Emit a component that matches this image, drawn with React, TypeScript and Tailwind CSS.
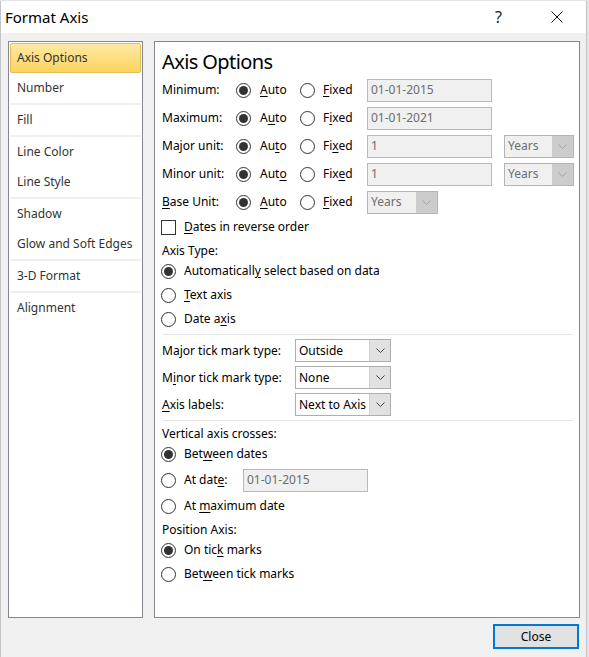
import type { ReactNode } from 'react'

// "&" marks the access key letter, like a Win32 resource string
function Mn({ text }: { text: string }) {
  const i = text.indexOf('&')
  if (i < 0) return <>{text}</>
  return (
    <>
      {text.slice(0, i)}
      <span className="underline decoration-1 underline-offset-[2px]">{text[i + 1]}</span>
      {text.slice(i + 2)}
    </>
  )
}

function Radio({ checked }: { checked?: boolean }) {
  return (
    <span className="w-[15px] h-[15px] rounded-full border border-[#333333] bg-white flex items-center justify-center shrink-0">
      {checked && <span className="w-[9px] h-[9px] rounded-full bg-[#333333]" />}
    </span>
  )
}

function Chevron({ color }: { color: string }) {
  return (
    <svg width="9" height="5" viewBox="0 0 9 5">
      <polyline points="0.5,0.5 4.5,4.5 8.5,0.5" fill="none" stroke={color} strokeWidth="1" />
    </svg>
  )
}

function TextBox({ value }: { value: string }) {
  return (
    <div className="w-[125px] h-[23px] border border-[#b9b9b9] bg-[#f0f0f0] text-[#6d6d6d] flex items-center px-[3px] shrink-0">
      {value}
    </div>
  )
}

function Combo({ value, disabled, width }: { value: string; disabled?: boolean; width: string }) {
  return (
    <div
      className={`${width} h-[23px] border flex shrink-0 ${
        disabled ? 'border-[#b4b4b4] bg-[#f0f0f0]' : 'border-[#adadad] bg-white'
      }`}
    >
      <span className={`flex-1 px-[3px] flex items-center whitespace-nowrap overflow-hidden ${disabled ? 'text-[#6d6d6d]' : 'text-black'}`}>
        {value}
      </span>
      <span
        className={`w-[21px] flex items-center justify-center ${
          disabled ? 'bg-[#cccccc]' : 'bg-[#e1e1e1] border-l border-[#d0d0d0]'
        }`}
      >
        <Chevron color={disabled ? '#a6a6a6' : '#444444'} />
      </span>
    </div>
  )
}

function UnitRow({
  label,
  auto,
  fixed,
  children,
}: {
  label: string
  auto: string
  fixed: string
  children: ReactNode
}) {
  return (
    <div className="h-[28px] flex items-center">
      <span className="w-[74px] shrink-0">
        <Mn text={label} />
      </span>
      <span className="w-[64px] flex items-center gap-[9px] shrink-0">
        <Radio checked />
        <span><Mn text={auto} /></span>
      </span>
      <span className="w-[67px] flex items-center gap-[8px] shrink-0">
        <Radio />
        <span><Mn text={fixed} /></span>
      </span>
      {children}
    </div>
  )
}

function RadioLine({ label, checked, h, children }: { label: string; checked?: boolean; h: string; children?: ReactNode }) {
  return (
    <div className={`${h} flex items-center`}>
      <span className="ml-[-1px] flex items-center gap-[8px]">
        <Radio checked={checked} />
        <span className={children ? 'w-[59px]' : ''}><Mn text={label} /></span>
      </span>
      {children}
    </div>
  )
}

function TickRow({ label, value }: { label: string; value: string }) {
  return (
    <div className="h-[27px] flex items-center">
      <span className="w-[133px] shrink-0"><Mn text={label} /></span>
      <Combo value={value} width="w-[96px]" />
    </div>
  )
}

const navItems: { label: string; active?: boolean; sep?: boolean }[] = [
  { label: 'Axis Options', active: true },
  { label: 'Number', sep: true },
  { label: 'Fill', sep: true },
  { label: 'Line Color' },
  { label: 'Line Style', sep: true },
  { label: 'Shadow' },
  { label: 'Glow and Soft Edges', sep: true },
  { label: '3-D Format', sep: true },
  { label: 'Alignment' },
]

export default function App() {
  return (
    <div className="w-[589px] h-[657px] bg-[#e4e4e4] pt-[1px] overflow-hidden font-['Noto_Sans',sans-serif] text-[12px] text-black leading-none">
      <div className="w-[587px] h-[656px] bg-[#f0f0f0] border-l border-r border-[#c4c4c4] flex flex-col">
        {/* title bar */}
        <div className="h-[32px] bg-white flex items-center shrink-0">
          <span className="ml-[4px] text-[15px] text-black">Format Axis</span>
          <span className="ml-auto text-[16px] text-[#222]">?</span>
          <span className="ml-[49px] mr-[23px]">
            <svg width="12" height="12" viewBox="0 0 12 12">
              <line x1="0.5" y1="0.5" x2="11.5" y2="11.5" stroke="#111" strokeWidth="1" />
              <line x1="11.5" y1="0.5" x2="0.5" y2="11.5" stroke="#111" strokeWidth="1" />
            </svg>
          </span>
        </div>

        {/* body */}
        <div className="flex gap-[11px] ml-[7px] mt-[8px]">
          <div className="w-[135px] h-[577px] border border-[#828790] bg-white p-[1px] text-[#333333]">
            {navItems.map(item => (
              <div key={item.label}>
                {item.active ? (
                  <div className="h-[30px] rounded-[2px] border border-[#e6bd52] bg-gradient-to-b from-[#fee9a2] to-[#fdd35d] flex items-center pl-[6px]">
                    {item.label}
                  </div>
                ) : (
                  <div className="h-[30px] flex items-center pl-[7px]">{item.label}</div>
                )}
                {item.sep && <div className="h-[2px] bg-[#eeeef3]" />}
              </div>
            ))}
          </div>

          <div className="w-[426px] h-[577px] border border-[#828790] bg-white pl-[7px]">
            <div className="h-[34px] pt-[10px] text-[20px] tracking-[-0.6px]">Axis Options</div>

            <UnitRow label="Minimum:" auto="&Auto" fixed="&Fixed">
              <TextBox value="01-01-2015" />
            </UnitRow>
            <UnitRow label="Maximum:" auto="A&uto" fixed="F&ixed">
              <TextBox value="01-01-2021" />
            </UnitRow>
            <UnitRow label="Major unit:" auto="Au&to" fixed="Fi&xed">
              <TextBox value="1" />
              <span className="ml-[12px]"><Combo value="Years" disabled width="w-[70px]" /></span>
            </UnitRow>
            <UnitRow label="Minor unit:" auto="Aut&o" fixed="Fix&ed">
              <TextBox value="1" />
              <span className="ml-[12px]"><Combo value="Years" disabled width="w-[70px]" /></span>
            </UnitRow>
            <UnitRow label="&Base Unit:" auto="&Auto" fixed="&Fixed">
              <Combo value="Years" disabled width="w-[71px]" />
            </UnitRow>

            <div className="h-[22px] flex items-center">
              <span className="ml-[-1px] w-[15px] h-[15px] border border-[#333333] bg-white shrink-0" />
              <span className="ml-[8px]"><Mn text="&Dates in reverse order" /></span>
            </div>

            <div className="h-[21px] pt-[5px] flex items-center">Axis Type:</div>
            <RadioLine h="h-[24px]" label="Automaticall&y select based on data" checked />
            <RadioLine h="h-[24px]" label="&Text axis" />
            <RadioLine h="h-[24px]" label="Date a&xis" />

            <div className="mt-[3px] mr-[6px] h-[1px] bg-[#e3e3e3]" />

            <div className="mt-[2px]">
              <TickRow label="Ma&jor tick mark type:" value="Outside" />
              <TickRow label="M&inor tick mark type:" value="None" />
              <TickRow label="&Axis labels:" value="Next to Axis" />
            </div>

            <div className="mt-[2px] mr-[6px] h-[1px] bg-[#e3e3e3]" />

            <div className="h-[23px] pt-[2px] flex items-center">Vertical axis crosses:</div>
            <RadioLine h="h-[20px]" label="Bet&ween dates" checked />
            <RadioLine h="h-[32px]" label="At dat&e:">
              <TextBox value="01-01-2015" />
            </RadioLine>
            <RadioLine h="h-[20px]" label="At &maximum date" />

            <div className="h-[24px] pt-[3px] flex items-center">Position Axis:</div>
            <RadioLine h="h-[20px]" label="On tic&k marks" checked />
            <RadioLine h="h-[28px]" label="Bet&ween tick marks" />
          </div>
        </div>

        {/* footer */}
        <div className="flex justify-end mt-[6px] mr-[7px]">
          <button className="w-[86px] h-[25px] border-2 border-[#0078d7] bg-[#e1e1e1] text-[12px] text-black leading-none">
            Close
          </button>
        </div>
      </div>
    </div>
  )
}
